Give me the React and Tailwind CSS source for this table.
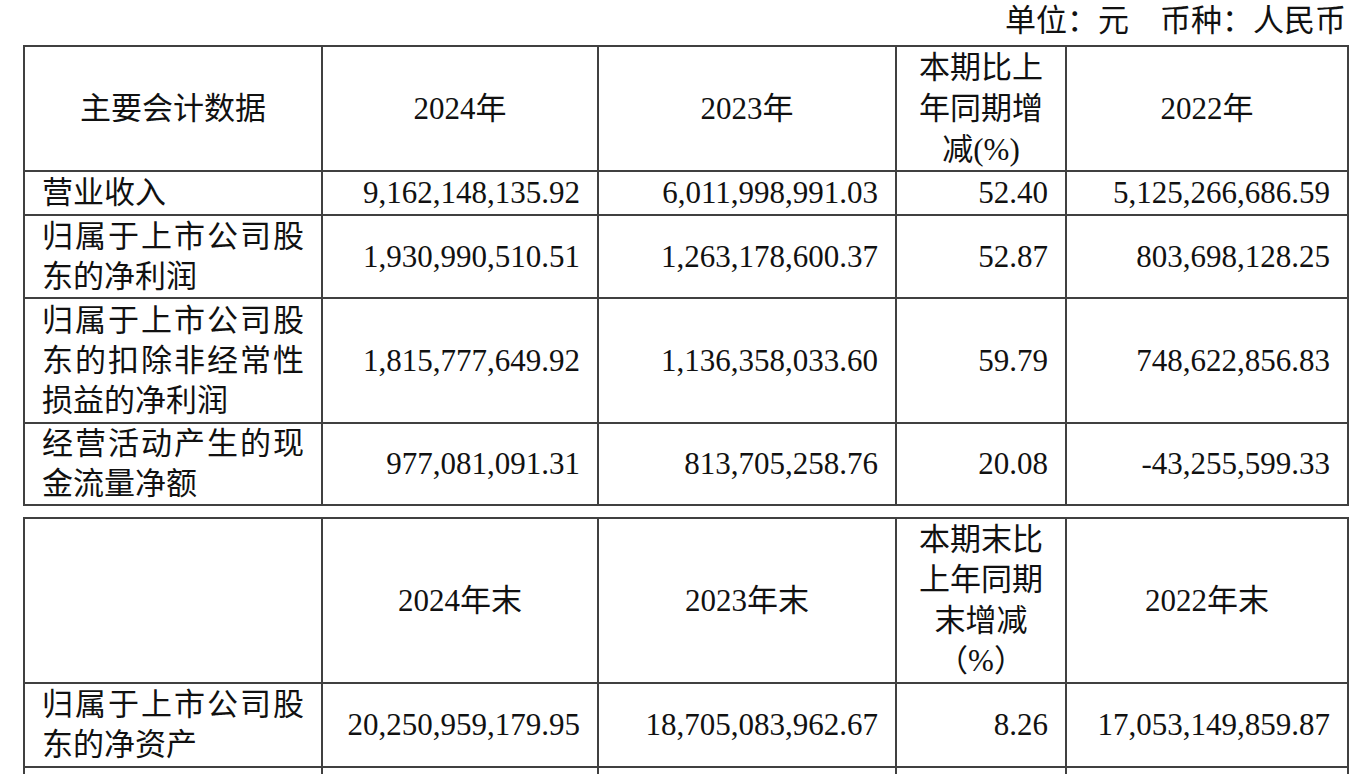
const font = {
  fontFamily: '"Liberation Serif", "Noto Sans CJK SC", serif',
}

const tableOne = [
  ['营业收入', '9,162,148,135.92', '6,011,998,991.03', '52.40', '5,125,266,686.59', 'h-[44px]'],
  ['归属于上市公司股东的净利润', '1,930,990,510.51', '1,263,178,600.37', '52.87', '803,698,128.25', 'h-[83px]'],
  ['归属于上市公司股东的扣除非经常性损益的净利润', '1,815,777,649.92', '1,136,358,033.60', '59.79', '748,622,856.83', 'h-[125px]'],
  ['经营活动产生的现金流量净额', '977,081,091.31', '813,705,258.76', '20.08', '-43,255,599.33', 'h-[82px]'],
]

const tableTwo = [
  ['归属于上市公司股东的净资产', '20,250,959,179.95', '18,705,083,962.67', '8.26', '17,053,149,859.87', 'h-[84px]'],
  ['总资产', '34,186,512,377.06', '30,214,476,810.35', '13.15', '27,931,270,515.92', 'h-[84px]'],
]

const cell = 'border-2 border-[#404040] px-[17px] py-0 align-middle'

function Cols() {
  return (
    <colgroup>
      <col className="w-[298px]" />
      <col className="w-[276px]" />
      <col className="w-[298px]" />
      <col className="w-[170px]" />
      <col className="w-[282px]" />
    </colgroup>
  )
}

function DataRow({ row }) {
  const [label, a, b, pct, c, h] = row
  return (
    <tr className={h}>
      <td className={`${cell} text-justify`}>{label}</td>
      <td className={`${cell} text-right whitespace-nowrap`}>{a}</td>
      <td className={`${cell} text-right whitespace-nowrap`}>{b}</td>
      <td className={`${cell} text-right whitespace-nowrap`}>{pct}</td>
      <td className={`${cell} text-right whitespace-nowrap`}>{c}</td>
    </tr>
  )
}

export default function App() {
  return (
    <div
      lang="zh-CN"
      className="w-[1358px] bg-white text-[#111] text-[31px] leading-[40px] [text-spacing-trim:space-all]"
      style={font}
    >
      <div className="h-[45px] flex items-end justify-end pr-[12px] pb-[4px]">
        单位：元　币种：人民币
      </div>

      <div className="pl-[23px]">
        <table className="table-fixed border-collapse w-[1324px]">
          <Cols />
          <tbody>
            <tr className="h-[124px]">
              <td className={`${cell} text-center`}>主要会计数据</td>
              <td className={`${cell} text-center`}>2024年</td>
              <td className={`${cell} text-center`}>2023年</td>
              <td className={`${cell} text-center leading-[41px]`}>
                本期比上<br />年同期增<br />减(%)
              </td>
              <td className={`${cell} text-center`}>2022年</td>
            </tr>
            {tableOne.map((row) => (
              <DataRow key={row[0]} row={row} />
            ))}
          </tbody>
        </table>

        <table className="table-fixed border-collapse w-[1324px] mt-[11px]">
          <Cols />
          <tbody>
            <tr className="h-[165px]">
              <td className={cell}></td>
              <td className={`${cell} text-center`}>2024年末</td>
              <td className={`${cell} text-center`}>2023年末</td>
              <td className={`${cell} text-center leading-[40.5px]`}>
                本期末比<br />上年同期<br />末增减<br />（%）
              </td>
              <td className={`${cell} text-center`}>2022年末</td>
            </tr>
            {tableTwo.map((row) => (
              <DataRow key={row[0]} row={row} />
            ))}
          </tbody>
        </table>
      </div>
    </div>
  )
}
